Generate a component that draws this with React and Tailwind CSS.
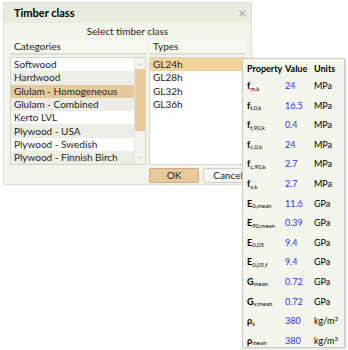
import React from 'react';

const categories = [
  'Softwood',
  'Hardwood',
  'Glulam - Homogeneous',
  'Glulam - Combined',
  'Kerto LVL',
  'Plywood - USA',
  'Plywood - Swedish',
  'Plywood - Finnish Birch',
];

const types = ['GL24h', 'GL28h', 'GL32h', 'GL36h'];

const props = [
  { s: 'f', sub: 'm,k', v: '24', u: 'MPa' },
  { s: 'f', sub: 't,0,k', v: '16.5', u: 'MPa' },
  { s: 'f', sub: 't,90,k', v: '0.4', u: 'MPa' },
  { s: 'f', sub: 'c,0,k', v: '24', u: 'MPa' },
  { s: 'f', sub: 'c,90,k', v: '2.7', u: 'MPa' },
  { s: 'f', sub: 'v,k', v: '2.7', u: 'MPa' },
  { s: 'E', sub: '0,mean', v: '11.6', u: 'GPa' },
  { s: 'E', sub: '90,mean', v: '0.39', u: 'GPa' },
  { s: 'E', sub: '0,05', v: '9.4', u: 'GPa' },
  { s: 'E', sub: '0,05,f', v: '9.4', u: 'GPa' },
  { s: 'G', sub: 'mean', v: '0.72', u: 'GPa' },
  { s: 'G', sub: 'v,mean', v: '0.72', u: 'GPa' },
  { s: 'ρ', sub: 'k', v: '380', u: 'kg/m', sup: true },
  { s: 'ρ', sub: 'mean', v: '380', u: 'kg/m', sup: true },
];

const App = () => {
  return (
    <div
      className="relative w-[348px] h-[350px] bg-white overflow-hidden text-[10px] text-[#1e1e1e]"
      style={{ fontFamily: 'Lato, "Noto Sans", sans-serif' }}
    >
      {/* Dialog */}
      <div className="ml-[3px] mt-[2px] w-[249px] h-[183px] bg-[#f2f3ea] border border-[#dcdfd3] flex flex-col overflow-hidden">
        <div className="h-[20px] bg-[#e9ebe1] flex items-center justify-between pl-[10px] pr-[5px]">
          <span className="font-bold text-[11px] text-black">Timber class</span>
          <span className="text-[#a0a39a] text-[13px] leading-none">×</span>
        </div>
        <div className="h-[17px] flex items-center justify-center">Select timber class</div>

        <div className="flex px-[6px] gap-[3px]">
          <div className="w-[136px] shrink-0 flex flex-col">
            <div className="h-[15px] flex items-center pl-[4px] border-b-2 border-[#dcdfd3] bg-[#f6f7f0]">Categories</div>
            <div className="mt-[2px] h-[108px] bg-white border border-[#d2d5c8] flex">
              <div className="flex-1 flex flex-col">
                {categories.map((c, i) => (
                  <div
                    key={c}
                    className={
                      'h-[13.3px] flex items-center pl-[3px] ' +
                      (i === 2 ? 'bg-[#e6c99b]' : i % 2 === 1 ? 'bg-[#ecede6]' : 'bg-white')
                    }
                  >
                    {c}
                  </div>
                ))}
              </div>
              <div className="w-[11px] bg-[#f3f3ef] flex flex-col items-center border-l border-[#e5e5df]">
                <span className="text-[7px] text-[#9a9a9a] h-[11px] leading-[11px]">︿</span>
                <div className="w-[10px] h-[62px] bg-[#e8c99a] rounded-[1px]" />
                <div className="flex-1" />
                <span className="text-[7px] text-[#9a9a9a] h-[11px] leading-[11px]">﹀</span>
              </div>
            </div>
          </div>
          <div className="flex-1 min-w-0 flex flex-col">
            <div className="h-[15px] flex items-center pl-[4px] border-b-2 border-[#dcdfd3] bg-[#f6f7f0]">Types</div>
            <div className="mt-[2px] h-[108px] bg-white border border-[#d2d5c8] flex flex-col">
              {types.map((t, i) => (
                <div
                  key={t}
                  className={'h-[13.3px] flex items-center pl-[3px] ' + (i === 0 ? 'bg-[#f3d39c]' : '')}
                >
                  {t}
                </div>
              ))}
            </div>
            <div className="mt-[3px] flex gap-[4px]">
              <button className="w-[50px] shrink-0 h-[15px] bg-[#e8c99b] border border-[#c9ab7c] rounded-[2px] flex items-center justify-center">
                OK
              </button>
              <button className="w-[50px] shrink-0 h-[15px] bg-[#f7f7f3] border border-[#cfcfc8] rounded-[2px] flex items-center justify-center">
                Cancel
              </button>
            </div>
          </div>
        </div>
      </div>

      {/* Property tooltip */}
      <div className="absolute left-[242px] top-[58px] w-[103px] h-[290px] bg-[#f4f5ec] border border-[#c8cbc0] shadow-[1px_1px_2px_rgba(0,0,0,0.15)] pl-[4px] pt-[3px]">
        <div className="flex h-[14px] items-center font-bold text-[9px] text-black">
          <span className="w-[38px]">Property</span>
          <span className="w-[29px]">Value</span>
          <span>Units</span>
        </div>
        {props.map((p, i) => (
          <div key={i} className="flex h-[19.6px] items-center text-[9px] text-black">
            <span className="w-[38px] font-bold">
              {p.s}
              <sub className="text-[6px] font-normal">{p.sub}</sub>
            </span>
            <span className="w-[29px] text-[#3030f0]">{p.v}</span>
            <span>
              {p.u}
              {p.sup && <sup className="text-[6px]">3</sup>}
            </span>
          </div>
        ))}
      </div>
    </div>
  );
};

export default App;
